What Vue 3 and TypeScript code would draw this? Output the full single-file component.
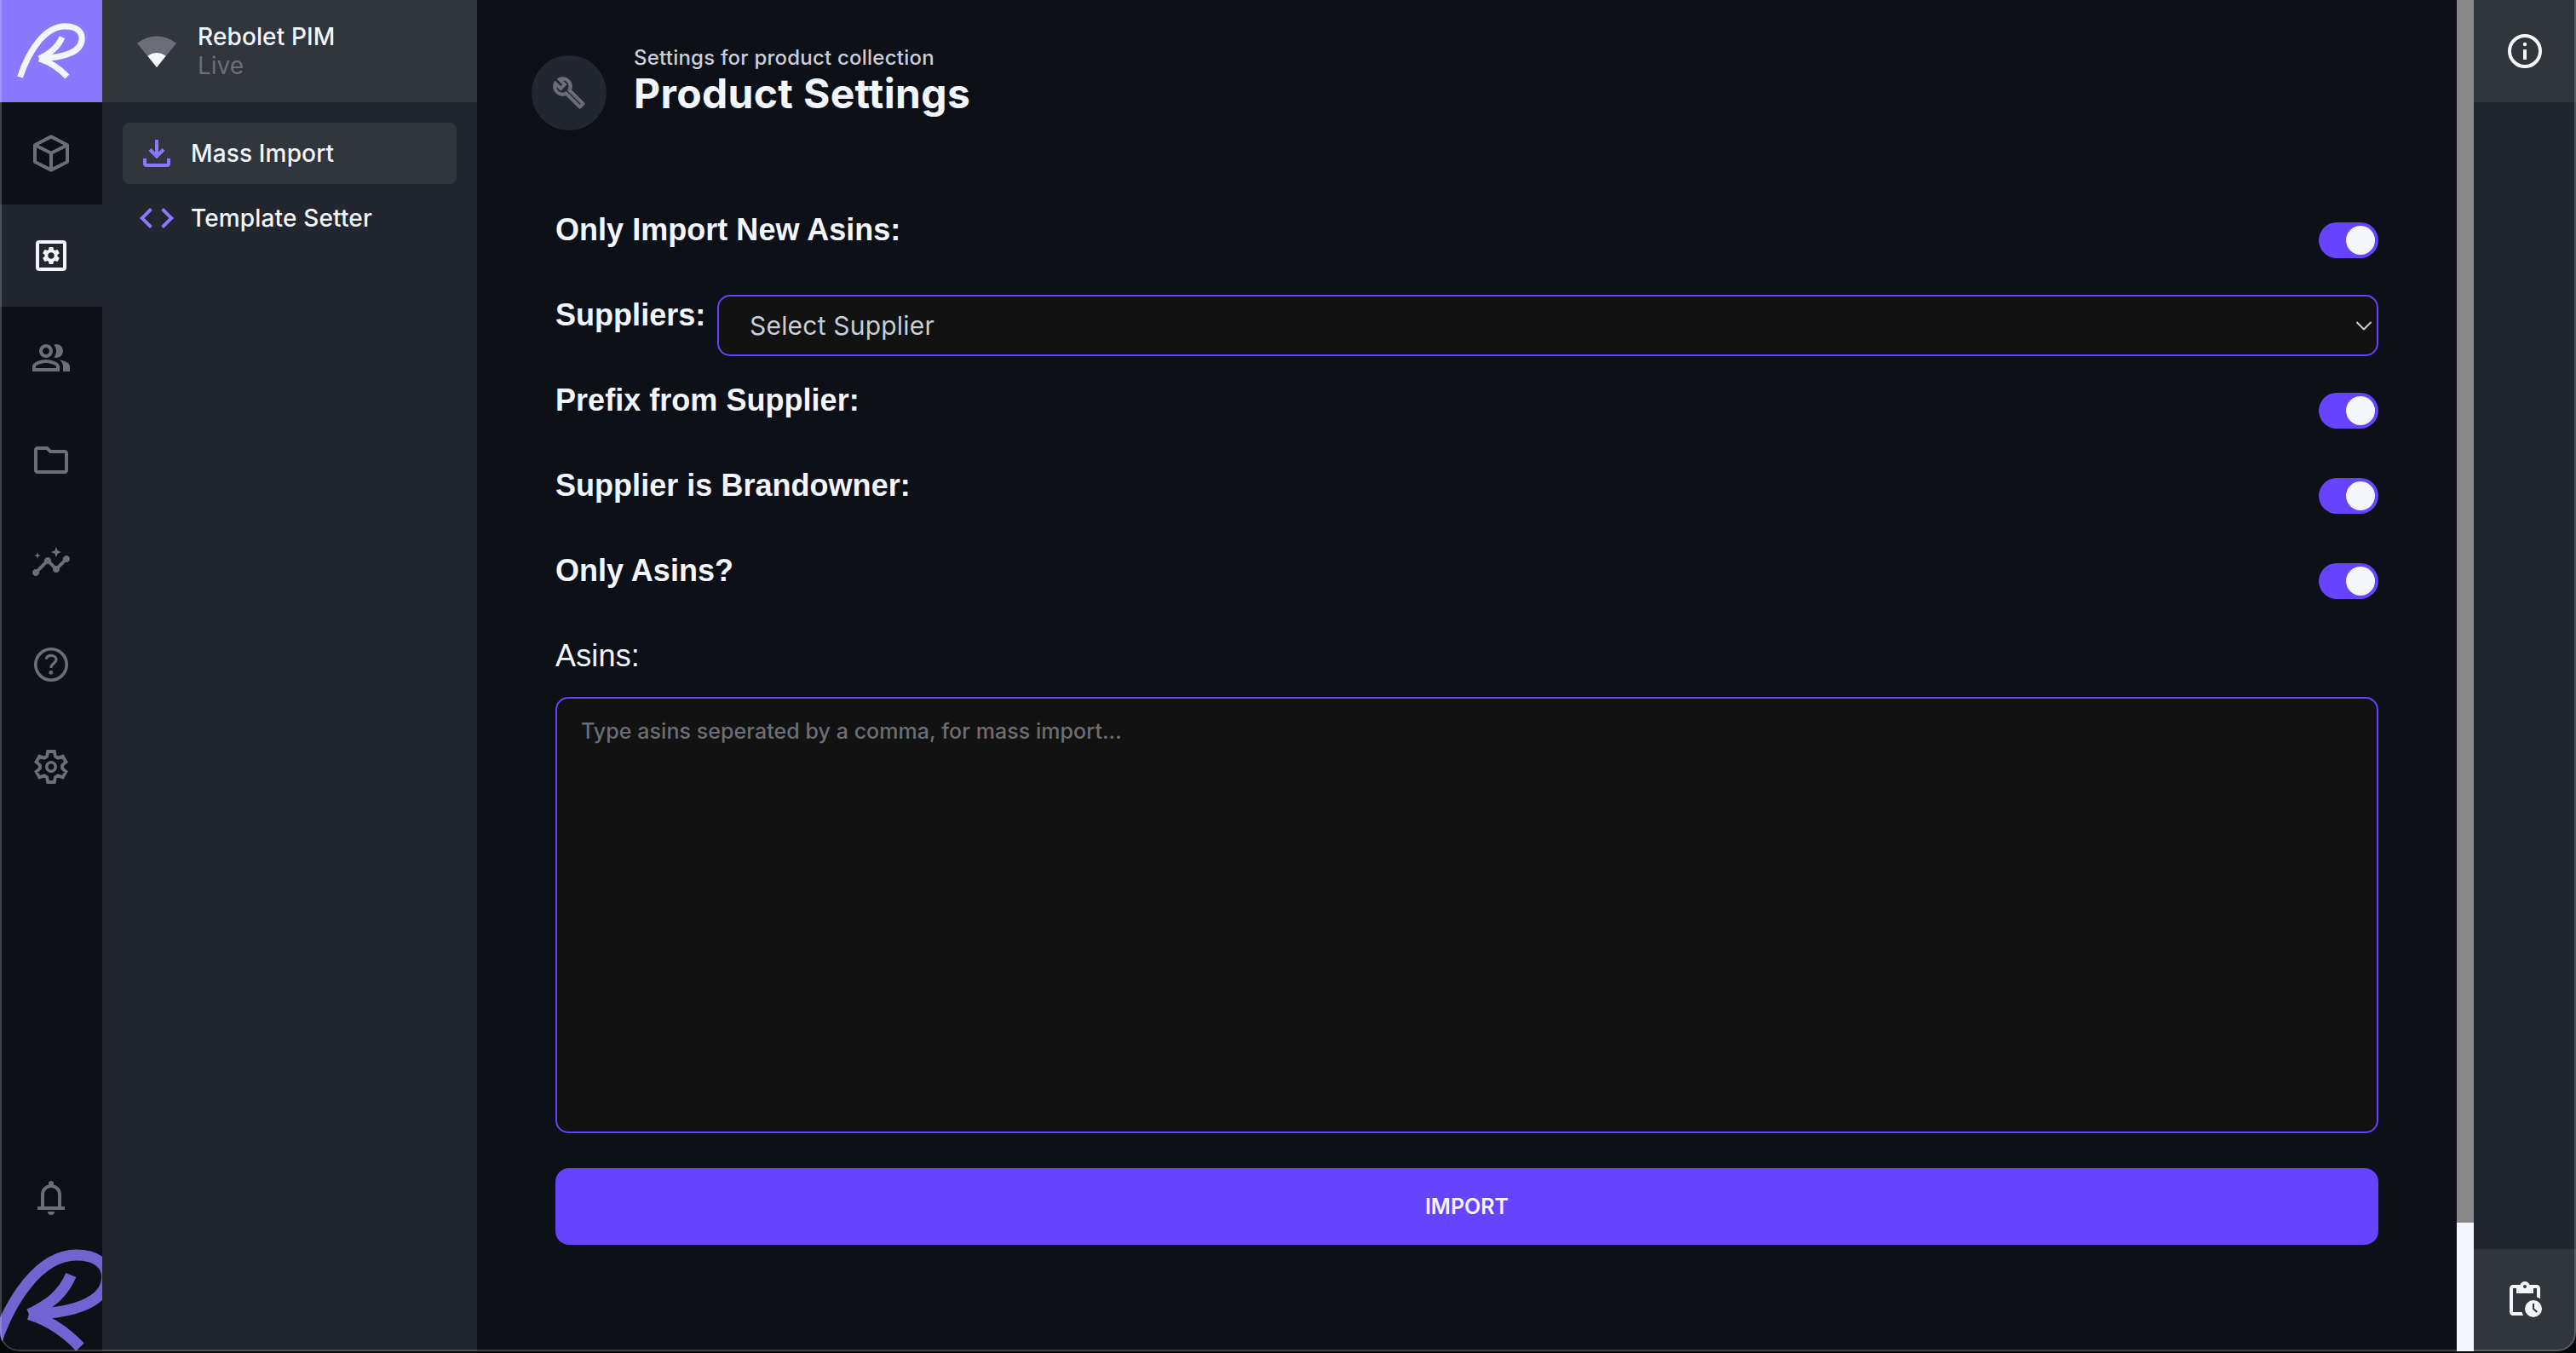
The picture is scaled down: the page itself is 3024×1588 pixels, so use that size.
<script setup lang="ts">
import { ref } from 'vue'

interface NavItem {
  id: string
  active?: boolean
}

interface Row {
  label: string
  kind: 'toggle' | 'select'
}

const nav: NavItem[] = [
  { id: 'products' },
  { id: 'settings', active: true },
  { id: 'people' },
  { id: 'files' },
  { id: 'insights' },
  { id: 'help' },
  { id: 'config' },
]

const rows: Row[] = [
  { label: 'Only Import New Asins:', kind: 'toggle' },
  { label: 'Suppliers:', kind: 'select' },
  { label: 'Prefix from Supplier:', kind: 'toggle' },
  { label: 'Supplier is Brandowner:', kind: 'toggle' },
  { label: 'Only Asins?', kind: 'toggle' },
]

// Outline of a six-toothed gear centred in a 24-unit box.
function gearOutline(): string {
  const points: string[] = []
  for (let tooth = 0; tooth < 6; tooth++) {
    for (const [offset, radius] of [[-22, 6.6], [-12, 9.2], [12, 9.2], [22, 6.6]]) {
      const angle = ((tooth * 60 + offset) * Math.PI) / 180
      points.push(`${(12 + radius * Math.sin(angle)).toFixed(2)} ${(12 - radius * Math.cos(angle)).toFixed(2)}`)
    }
  }
  return `M${points.join('L')}Z`
}

const gear = gearOutline()
const logo = 'M-7 116C12 58 47 7 89.5 7C112 7 127 17 125.500 35C124 60 92 75 35 76.5'
const logoArm = 'M83.3 30.5C74 53 57 66 34 76.5M34 76.5C58 84 78 98 94 115'
const asins = ref('')
</script>

<template>
  <div class="window">
    <nav class="rail">
      <div class="brand">
        <svg width="120" height="120" viewBox="0 0 120 120" fill="none" stroke="#f3f6fd" stroke-width="13">
          <g transform="translate(27.4 27) scale(.5475)"><path :d="logo" /><path :d="logoArm" /></g>
        </svg>
      </div>
      <div v-for="item in nav" :key="item.id" class="rail-item" :class="{ active: item.active }">
        <svg width="48" height="48" viewBox="0 0 24 24" fill="currentColor">
          <path v-if="item.id === 'products'" d="M12 2.200l9.500 4.900v9.900L12 21.800l-9.500-4.800V7.100zM2.500 7.100L12 11.900l9.500-4.800M12 11.900v9.900" fill="none" stroke="currentColor" stroke-width="2" stroke-linejoin="round" />
          <template v-else-if="item.id === 'settings'">
            <rect x="4" y="4" width="16" height="16" rx="1" fill="none" stroke="currentColor" stroke-width="2" />
            <path transform="translate(5.760 5.760) scale(.52)" d="M19.140 12.940c.04-.3.06-.61.06-.94 0-.32-.02-.64-.07-.94l2.030-1.580c.18-.14.23-.41.12-.61l-1.920-3.320c-.12-.22-.37-.29-.59-.22l-2.390.96c-.5-.38-1.030-.7-1.620-.94l-.36-2.540c-.04-.24-.24-.41-.48-.41h-3.840c-.24 0-.43.17-.47.41l-.36 2.540c-.59.24-1.130.57-1.620.94l-2.390-.96c-.22-.08-.47 0-.59.22L2.740 8.870c-.12.21-.08.47.12.61l2.030 1.580c-.05.3-.09.63-.09.94s.02.64.07.94l-2.030 1.580c-.18.14-.23.41-.12.61l1.920 3.320c.12.22.37.29.59.22l2.390-.96c.5.38 1.030.7 1.620.94l.36 2.540c.05.24.24.41.48.41h3.840c.24 0 .44-.17.47-.41l.36-2.540c.59-.24 1.130-.56 1.620-.94l2.390.96c.22.08.47 0 .59-.22l1.920-3.320c.12-.22.07-.47-.12-.61l-2.010-1.580zM12 15.600c-1.980 0-3.600-1.620-3.600-3.600s1.620-3.600 3.600-3.600 3.600 1.620 3.600 3.600-1.620 3.600-3.600 3.600z" />
          </template>
          <path v-else-if="item.id === 'people'" d="M16.670 13.130C18.040 14.060 19 15.320 19 17v3h4v-3c0-2.180-3.570-3.470-6.330-3.870zM15 12c2.210 0 4-1.790 4-4s-1.790-4-4-4c-.47 0-.91.1-1.330.24C14.500 5.270 15 6.580 15 8s-.5 2.730-1.330 3.760c.42.14.86.24 1.330.24zM9 12c2.210 0 4-1.790 4-4s-1.790-4-4-4-4 1.790-4 4 1.790 4 4 4zm0-6c1.100 0 2 .9 2 2s-.9 2-2 2-2-.9-2-2 .9-2 2-2zM9 13c-2.670 0-8 1.340-8 4v3h16v-3c0-2.660-5.330-4-8-4zm6 5H3v-.99C3.200 16.290 6.300 15 9 15s5.800 1.290 6 2v1z" />
          <path v-else-if="item.id === 'files'" d="M9.170 6l2 2H20v10H4V6h5.170M10 4H4c-1.100 0-1.990.9-1.990 2L2 18c0 1.100.9 2 2 2h16c1.100 0 2-.9 2-2V8c0-1.100-.9-2-2-2h-8l-2-2z" />
          <path v-else-if="item.id === 'insights'" d="M21 8c-1.450 0-2.260 1.440-1.930 2.510l-3.550 3.560c-.3-.09-.74-.09-1.040 0l-2.550-2.550C12.270 10.450 11.460 9 10 9c-1.450 0-2.270 1.440-1.930 2.520l-4.560 4.550C2.440 15.740 1 16.550 1 18c0 1.100.9 2 2 2 1.450 0 2.260-1.440 1.930-2.510l4.550-4.560c.3.09.74.09 1.040 0l2.550 2.550C12.730 16.550 13.540 18 15 18c1.450 0 2.270-1.440 1.930-2.520l3.560-3.550C21.560 12.260 23 11.450 23 10c0-1.100-.9-2-2-2zM15 9l.94-2.070L18 6l-2.060-.93L15 3l-.92 2.070L12 6l2.080.93zM4 6l.5 1.500L6 8l-1.500.5L4 10l-.5-1.500L2 8l1.500-.5z" />
          <template v-else-if="item.id === 'help'">
            <circle cx="12" cy="12" r="9.100" fill="none" stroke="currentColor" stroke-width="1.800" />
            <path d="M9.100 8.900C9.300 7.400 10.600 6.700 12 6.700c1.700 0 3 1 3 2.400 0 2-3.100 2.400-3.100 4.900" fill="none" stroke="currentColor" stroke-width="1.600" />
            <circle cx="11.900" cy="16.700" r="1.200" />
          </template>
          <template v-else>
            <path :d="gear" fill="none" stroke="currentColor" stroke-width="1.900" />
            <circle cx="12" cy="12" r="2.600" fill="none" stroke="currentColor" stroke-width="1.800" />
          </template>
        </svg>
      </div>
      <div class="rail-foot">
        <svg width="48" height="48" viewBox="0 0 48 48" fill="currentColor">
          <path d="M14 36V21a10 10 0 0 1 20 0v15" fill="none" stroke="currentColor" stroke-width="4" />
          <circle cx="24" cy="8" r="3" />
          <path d="M8 35h32v4H8zM20 41h8a4 4 0 0 1-8 0z" />
        </svg>
        <svg width="120" height="120" viewBox="0 0 120 120" fill="none" stroke="#7363d1" stroke-width="13">
          <path :d="logo" /><path :d="logoArm" />
        </svg>
      </div>
    </nav>

    <aside class="sidebar">
      <header class="workspace">
        <svg width="48" height="40" viewBox="0 0 48 40">
          <path d="M24 39L1 10.700A36.500 36.500 0 0 1 47 10.700z" fill="#6b6e76" />
          <path d="M24 39L13.300 25.800A17 17 0 0 1 34.700 25.800z" fill="#f3f6fd" />
        </svg>
        <div>
          <div class="name">Rebolet PIM</div>
          <div class="muted">Live</div>
        </div>
      </header>
      <ul class="menu">
        <li class="selected">
          <svg width="48" height="48" viewBox="0 0 48 48" fill="none" stroke="#8c78ff" stroke-width="4">
            <path d="M24 8v18M16 19.500l8 8 8-8M10 30v6q0 2 2 2h24q2 0 2-2v-6" />
          </svg>
          <span>Mass Import</span>
        </li>
        <li>
          <svg width="48" height="48" viewBox="0 0 24 24" fill="#8c78ff">
            <path d="M9.400 16.600 4.800 12l4.600-4.600L8 6l-6 6 6 6 1.400-1.400zm5.200 0 4.600-4.600-4.600-4.600L16 6l6 6-6 6-1.400-1.400z" />
          </svg>
          <span>Template Setter</span>
        </li>
      </ul>
    </aside>

    <main class="content">
      <header class="page-head">
        <div class="badge">
          <svg width="40" height="40" viewBox="0 0 24 24" fill="#6b6e76" stroke="#6b6e76" stroke-width=".6">
            <path d="M22.610 18.990l-9.080-9.080c.93-2.340.45-5.100-1.440-7C9.790.61 6.210.4 3.660 2.260L7.500 6.110 6.080 7.520 2.250 3.690C.39 6.230.6 9.820 2.900 12.110c1.860 1.860 4.570 2.350 6.890 1.480l9.110 9.110c.39.39 1.020.39 1.410 0l2.300-2.300c.4-.38.4-1.010 0-1.410zm-3 1.600l-9.460-9.460c-.61.45-1.290.72-2 .82-1.360.2-2.790-.21-3.830-1.250C3.370 9.760 2.930 8.500 3 7.260l3.090 3.090 4.240-4.240-3.090-3.090c1.240-.07 2.490.37 3.440 1.310 1.080 1.080 1.490 2.570 1.240 3.960-.12.71-.42 1.370-.88 1.960l9.450 9.450-.88.89z" />
          </svg>
        </div>
        <div class="page-titles">
          <p>Settings for product collection</p>
          <h1>Product Settings</h1>
        </div>
      </header>

      <form class="form" @submit.prevent>
        <div v-for="row in rows" :key="row.label" class="row">
          <label>{{ row.label }}</label>
          <div v-if="row.kind === 'select'" class="select">
            <span>Select Supplier</span>
            <svg width="20" height="14" viewBox="0 0 20 14" fill="none" stroke="#c9ced9" stroke-width="2" stroke-linecap="round" stroke-linejoin="round"><path d="M2 3.500l8 8 8-8" /></svg>
          </div>
          <div v-else class="toggle"><i></i></div>
        </div>
        <label class="asins-label">Asins:</label>
        <textarea v-model="asins" placeholder="Type asins seperated by a comma, for mass import..."></textarea>
        <button type="submit">IMPORT</button>
      </form>
    </main>

    <div class="scrollbar"><div class="thumb"></div></div>

    <aside class="right">
      <div class="tile">
        <svg width="48" height="48" viewBox="0 0 48 48" fill="#f3f6fd">
          <circle cx="24" cy="24" r="18" fill="none" stroke="#f3f6fd" stroke-width="4" />
          <circle cx="24" cy="16" r="2.200" /><path d="M22 22h4v12h-4z" />
        </svg>
      </div>
      <div class="tile">
        <svg width="48" height="48" viewBox="0 0 24 24" fill="#f3f6fd">
          <path d="M19 3h-4.180C14.400 1.840 13.300 1 12 1s-2.400.84-2.820 2H5c-1.100 0-2 .9-2 2v14c0 1.100.9 2 2 2h6.100a7 7 0 0 1-.8-2H5V5h2v3h10V5h2v5.300a7 7 0 0 1 2 .9V5c0-1.100-.9-2-2-2z" />
          <circle cx="12" cy="4" r="1" fill="#31353c" />
          <circle cx="17" cy="17" r="5" />
          <path d="M17 14v3l2.100 2" fill="none" stroke="#31353c" />
        </svg>
      </div>
    </aside>
    <div class="frame"></div>
  </div>
</template>

<style>
body { margin: 0; background: #05070b; }
</style>

<style scoped>
.window { position: relative; display: flex; width: 3024px; height: 1586px; overflow: hidden; border-radius: 0 0 22px 22px; background: #0d1017; color: #f3f6fd; font: 400 28px/34px Inter, "Liberation Sans", sans-serif; }
svg { display: block; flex: none; }
.rail { width: 120px; flex: none; display: flex; flex-direction: column; overflow: hidden; }
.brand { height: 120px; background: #8c78ff; }
.rail-item { height: 120px; display: flex; align-items: center; justify-content: center; color: #6b6e76; }
.rail-item.active { background: #22262e; color: #f3f6fd; }
.rail-foot { margin-top: auto; display: flex; flex-direction: column; align-items: center; gap: 37px; color: #6b6e76; }
.sidebar { width: 440px; flex: none; background: #22262e; }
.workspace { box-sizing: border-box; height: 120px; padding-left: 40px; display: flex; align-items: center; gap: 24px; background: #31353c; }
.name { font-weight: 500; letter-spacing: .12px; }
.muted { color: #6b6e76; }
.menu { list-style: none; margin: 0; padding: 24px; display: flex; flex-direction: column; gap: 4px; font-weight: 500; letter-spacing: .15px; }
.menu li { height: 72px; padding-left: 16px; display: flex; align-items: center; gap: 16px; border-radius: 8px; }
.menu .selected { background: #31353c; }
.content { flex: 1; }
.page-head { display: flex; padding: 50px 0 0 64px; gap: 32px; height: 182px; }
.badge { width: 88px; height: 88px; margin-top: 15px; border-radius: 50%; background: #22262e; display: flex; align-items: center; justify-content: center; }
.page-titles p { margin: 0; font-size: 24px; line-height: 35px; font-weight: 500; letter-spacing: .22px; color: #c9ced9; }
.page-titles h1 { margin: 1px 0 0; font-size: 48px; line-height: 48px; font-weight: 700; letter-spacing: .33px; }
.form { padding: 0 92px; display: flex; flex-direction: column; }
.row { height: 100px; display: flex; justify-content: space-between; }
.row label { font: 700 36px/76px "Liberation Sans", sans-serif; letter-spacing: .03px; }
.toggle { width: 70px; height: 42px; box-sizing: border-box; padding: 4px; align-self: center; border-radius: 21px; background: #6643ff; display: flex; justify-content: flex-end; }
.toggle i { width: 34px; height: 34px; border-radius: 50%; background: #f3f6fd; }
.select { box-sizing: border-box; width: 1950px; height: 72px; align-self: center; padding: 0 5px 0 36px; border: 2px solid #6643ff; border-radius: 15px; background: #121212; color: #c9ced9; font-size: 30px; letter-spacing: .2px; display: flex; align-items: center; justify-content: space-between; }
.asins-label { height: 86px; font: 400 36px/76px "Liberation Sans", sans-serif; letter-spacing: .15px; }
textarea { display: block; box-sizing: border-box; height: 512px; margin: 0; padding: 22px 28px; border: 2px solid #6643ff; border-radius: 15px; resize: none; outline: none; background: #121212; color: #f3f6fd; font: 500 25px/32px Inter, sans-serif; letter-spacing: .06px; }
textarea::placeholder { color: #6b6e76; opacity: 1; }
button { margin: 41px 0 0; height: 90px; padding: 0; border: 0; border-radius: 16px; background: #6643ff; color: #f3f6fd; font: 600 25px/32px Inter, sans-serif; }
.scrollbar { width: 20px; flex: none; background: #f3f6fd; position: relative; z-index: 2; }
.thumb { height: 1435px; background: #888888; }
.right { width: 120px; flex: none; display: flex; flex-direction: column; justify-content: space-between; background: #22262e; }
.tile { height: 120px; display: flex; align-items: center; justify-content: center; background: #31353c; }
.frame { position: absolute; inset: 0; border: 2px solid rgba(255, 255, 255, .2); border-top: 0; border-radius: 0 0 22px 22px; pointer-events: none; }
</style>
